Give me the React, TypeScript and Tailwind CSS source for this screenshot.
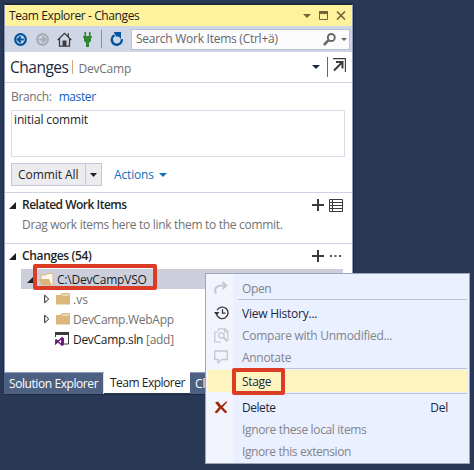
import type { ReactNode } from "react";

const Plus = () => (
  <svg width="12" height="12" viewBox="0 0 12 12" className="block" shapeRendering="crispEdges">
    <path d="M5 0h2v12H5zM0 5h12v2H0z" fill="#3b3b3d" />
  </svg>
);

const Down = ({ className, w = 8 }: { className: string; w?: number }) => (
  <svg width={w} height="4" viewBox="0 0 8 4" className={`block shrink-0 ${className}`} preserveAspectRatio="none">
    <path d="M0 0h8L4 4z" fill="currentColor" />
  </svg>
);

const Nav = ({ color, flip }: { color: string; flip?: boolean }) => (
  <svg width="13" height="13" viewBox="0 0 13 13" className={flip ? "block -scale-x-100" : "block"}>
    <circle cx="6.5" cy="6.5" r="5.3" fill="none" stroke={color} strokeWidth="2.2" />
    <path d="M6.8 3.5L3.6 6.5l3.2 3M3.8 6.5h6" fill="none" stroke={color} strokeWidth="1.8" />
  </svg>
);

const Toolbar = () => (
  <div className="flex h-[26px] items-center bg-[#cfd6e5] pl-[9px]">
    <Nav color="#00539c" />
    <div className="ml-[9px]"><Nav color="#a9abb3" flip /></div>
    <svg width="15" height="15" viewBox="0 0 15 15" className="ml-2 block">
      <path d="M.7 8L7.5 1.3 14.3 8M2.5 7v7.2h10V7M11.3 4.5V1.3" fill="none" stroke="#3b3b3d" strokeWidth="1.3" />
      <path d="M5.5 8.5h4V14h-4z" fill="#3b3b3d" />
    </svg>
    <svg width="9" height="15" viewBox="0 0 9 15" className="ml-[11px] block">
      <path d="M1.4 0h1.7v4H1.4zM5.9 0h1.7v4H5.9zM0 4h9v1.8H8V9L6 10.7V15H3v-4.3L1 9V5.8H0z" fill="#308632" />
    </svg>
    <div className="ml-[9px] h-[18px] w-px bg-[#8591a8]" />
    <svg width="14" height="15" viewBox="0 0 14 15" className="ml-2 block">
      <path d="M4.600 3.300A5 5 0 1 0 11.800 7.200" fill="none" stroke="#00539c" strokeWidth="2.400" />
      <path d="M3.800 0h7.200v7L8.700 4.600 6.300 4.800z" fill="#00539c" />
    </svg>
    <div className="ml-[7px] flex h-[21px] w-[219px] items-center border border-[#b8c1d2] bg-[#fcfcfc] pl-1 text-[#66666b]">
      <span className="w-[154px] tracking-[-0.260px]">Search Work Items (Ctrl+ä)</span>
      <svg width="13" height="13" viewBox="0 0 13 13" className="ml-[33px] block">
        <circle cx="8.300" cy="4.500" r="3.500" fill="none" stroke="#66666a" strokeWidth="1.900" />
        <path d="M5.600 7.200L.9 12" stroke="#66666a" strokeWidth="2.600" />
      </svg>
      <Down w={6} className="ml-[5px] h-[3px]" />
    </div>
  </div>
);

const Expanded = ({ big }: { big?: boolean }) => (
  <svg width={big ? 8 : 7} height={big ? 8 : 7} viewBox="0 0 7 7" className="block shrink-0">
    <path d="M7 0v7H0z" fill="#1e1e1e" />
  </svg>
);

const Folder = () => (
  <svg width="14" height="12" viewBox="0 0 14 12" className="block">
    <path d="M5.5.5L6.500 0H13l1 1v10.500H0V2h4.500z" fill="#dcb67a" />
    <path d="M6 2h7" stroke="#fbf3e4" strokeWidth="1" />
  </svg>
);

const TreeRow = ({ children }: { children: ReactNode }) => (
  <div className="flex h-5 items-center pl-[23px]">
    <svg width="6" height="10" viewBox="0 0 6 10" className="mr-[6px] block">
      <path d="M.7 1.2v7.600L4.700 5z" fill="#fff" stroke="#1e1e1e" />
    </svg>
    <Folder />
    <span className="ml-[3px] pt-px text-[#717171]">{children}</span>
  </div>
);

const MenuItem = ({ icon, label, shortcut, enabled, track }: { icon?: ReactNode; label: ReactNode; shortcut?: string; enabled?: boolean; track: string }) => (
  <div className={`flex h-[22px] items-center ${enabled ? "text-[#1b293e]" : "text-[#838489]"}`}>
    <div className="flex w-[27px] justify-center pl-[3px]">{icon}</div>
    <span className={`ml-[9px] pt-px ${track}`}>{label}</span>
    {shortcut && <span className="mr-[21px] ml-auto pt-px tracking-[-0.200px]">{shortcut}</span>}
  </div>
);

const Sep = ({ className }: { className: string }) => <div className={`mr-[2px] ml-[32px] h-px bg-[#bec3cf] ${className}`} />;

const ContextMenu = () => (
  <div className="absolute top-[273px] left-[205px] z-10 h-[191px] w-[265px] border border-[#9ba7b7] bg-[linear-gradient(to_right,#f2f4fe_27px,#eaf0ff_27px)] pt-[3px]">
    <MenuItem track="tracking-[-0.400px]" label="Open" icon={
      <svg width="14" height="14" viewBox="0 0 14 14"><path d="M2 12.500C-.5 7.500 3 4.500 7 4.500h5M8.500 1L12.300 4.500 8.500 8" fill="none" stroke="#c5c8d0" strokeWidth="2" /></svg>
    } />
    <Sep className="mb-[2px]" />
    <MenuItem track="tracking-[-0.240px]" enabled label="View History..." icon={
      <svg width="15" height="14" viewBox="0 0 15 14"><path d="M2.700 8.500A5.800 5.800 0 1 0 3.100 4.200M8.500 3.300V7.200h3" fill="none" stroke="#36363a" strokeWidth="1.300" /><path d="M0 6h5.500L2.600 9.500z" fill="#36363a" /></svg>
    } />
    <MenuItem track="tracking-[-0.270px]" label="Compare with Unmodified..." icon={
      <svg width="15" height="15" viewBox="0 0 15 15" fill="none" stroke="#c5c8d0" strokeWidth="1.200"><path d="M4 4H.8v10H7M4.500 3.500V.8H11L13.800 3.500V12M10.500 1v3h3" /><circle cx="7.500" cy="7.500" r="2.700" /><path d="M9.500 9.500l4 4" strokeWidth="2" /></svg>
    } />
    <MenuItem track="tracking-[-0.300px]" label="Annotate" icon={
      <svg width="14" height="14" viewBox="0 0 14 14"><path d="M.7 1h12.600v8.500H7.500L4 13V9.500H.7z" fill="none" stroke="#c5c8d0" strokeWidth="1.300" /></svg>
    } />
    <Sep className="mb-px" />
    <div className="mr-[2px] ml-[2px] h-[22px] bg-[#fdf4bf]">
      <div className="-ml-[2px]">
        <MenuItem enabled track="tracking-[-0.350px]" label={<span className="relative">Stage<span className="absolute -top-[5px] -left-[10px] h-[27px] w-[53px] rounded-[2px] border-4 border-[#dc3c24]" /></span>} />
      </div>
    </div>
    <Sep className="mt-px mb-[2px]" />
    <MenuItem enabled track="tracking-[-0.450px]" label="Delete" shortcut="Del" icon={
      <svg width="14" height="13" viewBox="0 0 14 13"><path d="M1 1.500l3-1 3.200 4.200L12.500.3l.8.7-4.600 5.200 4.600 4.800-2 1.200-4.500-4.400L3 12.300l-2.500-.9 4.400-5.100z" fill="#a1260d" /></svg>
    } />
    <MenuItem track="tracking-[-0.350px]" label="Ignore these local items" />
    <MenuItem track="tracking-[-0.400px]" label="Ignore this extension" />
  </div>
);

const Section = ({ title, action, track }: { title: string; action: ReactNode; track: string }) => (
  <div className="flex h-[24px] items-center pl-1">
    <Expanded />
    <span className={`ml-[6px] font-semibold text-[#1e1e1e] ${track}`}>{title}</span>
    <div className="mr-[9px] ml-auto flex items-center">{action}</div>
  </div>
);

export default function App() {
  return (
    <div className="relative h-[470px] w-[474px] overflow-hidden bg-[#293955] pt-[4px] pl-[4px] font-['Open_Sans','Noto_Sans',sans-serif] text-[12px] leading-4 whitespace-nowrap">
      <div className="h-[369px] w-[349px] border border-[#8e9bbc] border-t-[#19263c] bg-white shadow-[0_0_0_1px_#1c2a44]">
        <div className="flex h-[21px] items-center bg-[#fff29d] pl-[4px] text-[#1b1b1b]">
          <span className="pt-px tracking-[-0.390px]">Team Explorer - Changes</span>
          <div className="mr-[6px] ml-auto flex items-center text-[#75633d]">
            <Down className="mr-2" />
            <svg width="9" height="9" viewBox="0 0 9 9" className="mr-2"><path d="M.5.5h8v8h-8z" fill="none" stroke="currentColor" /><path d="M0 0h9v3H0z" fill="currentColor" /></svg>
            <svg width="10" height="9" viewBox="0 0 10 9"><path d="M1 .5l8 8M9 .5l-8 8" stroke="currentColor" strokeWidth="1.600" /></svg>
          </div>
        </div>
        <Toolbar />
        <div className="flex h-[31px] items-center border-b border-[#ccd3e2] pl-[5px]">
          <span className="text-[15.500px] tracking-[-0.500px] text-[#1b293e]">Changes</span>
          <span className="ml-[4px] h-[14px] w-px bg-[#d5a878]" />
          <span className="ml-[5px] pt-[3px] tracking-[-0.200px] text-[#717171]">DevCamp</span>
          <Down className="mr-[7px] ml-auto text-[#1b293e]" />
          <span className="mr-[5px] h-5 w-px bg-[#66666a]" />
          <svg width="13" height="14" viewBox="0 0 13 14" className="mr-[6px] mb-[4px]"><path d="M0 .6h12.400V14" fill="none" stroke="#3b3b3d" strokeWidth="1.100" /><path d="M1 12.500L8.500 5M3 4h6.500v6.500" fill="none" stroke="#3b3b3d" strokeWidth="2" /></svg>
        </div>
        <div className="flex h-[27px] items-center pt-px pl-[6px]">
          <span className="tracking-[-0.330px] text-[#717171]">Branch:</span>
          <span className="ml-[7px] tracking-[-0.400px] text-[#0e61c5]">master</span>
        </div>
        <div className="ml-[6px] h-[47px] w-[334px] border border-[#d9dce9] pt-px pl-[2px] tracking-[-0.150px] text-[#1e1e1e]">initial commit</div>
        <div className="mt-[6px] ml-[6px] flex h-[23px] items-center">
          <div className="flex h-full w-[91px] border border-[#c6c8d7] bg-[#ececf0]">
            <div className="w-[74px] border-r border-[#c6c8d7] pt-[3px] pl-[6px] tracking-[-0.050px] text-[#1e1e1e]">Commit All</div>
            <Down w={7} className="m-auto text-[#1e1e1e]" />
          </div>
          <span className="ml-[12px] pt-px tracking-[-0.150px] text-[#0e70c0]">Actions</span>
          <Down className="mt-px ml-[5px] text-[#0e70c0]" />
        </div>
        <div className="mt-[6px] h-[51px] border-t border-[#ccd3e2]">
          <Section title="Related Work Items" track="tracking-[-0.500px]" action={<><Plus /><svg width="14" height="13" viewBox="0 0 14 13" className="ml-[5px]"><path d="M.5.5h13v12H.5zM.5 3.500h13M.5 6.500h13M.5 9.500h13M3.500.5v12" fill="none" stroke="#3b3b3d" /></svg></>} />
          <div className="pl-[17px] tracking-[-0.310px] text-[#717171]">Drag work items here to link them to the commit.</div>
        </div>
        <div className="border-t border-[#ccd3e2]">
          <Section title="Changes (54)" track="tracking-[-0.340px]" action={<><Plus /><svg width="11" height="2" className="mr-[2px] ml-[6px]"><path d="M0 0h2v2H0zM4.500 0h2v2h-2zM9 0h2v2H9z" fill="#55555a" /></svg></>} />
        </div>
        <div className="ml-[16px] w-[322px]">
          <div className="relative mt-px flex h-5 items-center bg-[#cccedb] pl-[6px]">
            <Expanded big />
            <svg width="15" height="13" viewBox="0 0 15 13" className="ml-[4px]"><path d="M2 11V2h5l1-1.500h6V12" fill="#fffaf0" stroke="#dcb67a" /><path d="M0 6h10l3 6.500H3z" fill="#dcb67a" /></svg>
            <span className="ml-[3px] pt-px tracking-[-0.200px] text-[#1e1e1e]">C:\DevCampVSO</span>
            <div className="absolute -top-[5px] left-[12px] h-[26px] w-[124px] rounded-[2px] border-4 border-[#dc3c24]" />
          </div>
          <TreeRow>.vs</TreeRow>
          <TreeRow><span className="tracking-[-0.280px]">DevCamp.WebApp</span></TreeRow>
          <div className="flex h-5 items-center pl-[34px] text-[#1e1e1e]">
            <svg width="14" height="14" viewBox="0 0 14 14"><path d="M.5 5V1h13v11H9" fill="white" stroke="#3b3b3d" /><path d="M0 0h14v3H0z" fill="#3b3b3d" /><path d="M.8 7.500v4L6.800 6v7L.8 7.500M6.800 6l1.500.7v5.800l-1.500.5" fill="none" stroke="#68217a" strokeWidth="1.500" /></svg>
            <span className="ml-[4px] pt-px tracking-[-0.290px]">DevCamp.sln <span className="text-[#717171]">[add]</span></span>
          </div>
        </div>
      </div>
      <div className="flex h-[21px] w-[349px] text-white shadow-[0_1px_0_#1c2a44]">
        <div className="w-[100px] border-r border-[#d8deea] bg-[#4d6082] pt-[3px] pl-[5px] tracking-[-0.420px]">Solution Explorer</div>
        <div className="-mt-1 h-[24px] w-[86px] bg-white pt-[6px] pl-[6px] tracking-[-0.500px] text-[#1e1e1e]">Team Explorer</div>
        <div className="w-[163px] bg-[#4d6082] pt-[3px] pl-[5px]">Cl</div>
      </div>
      <ContextMenu />
    </div>
  );
}
